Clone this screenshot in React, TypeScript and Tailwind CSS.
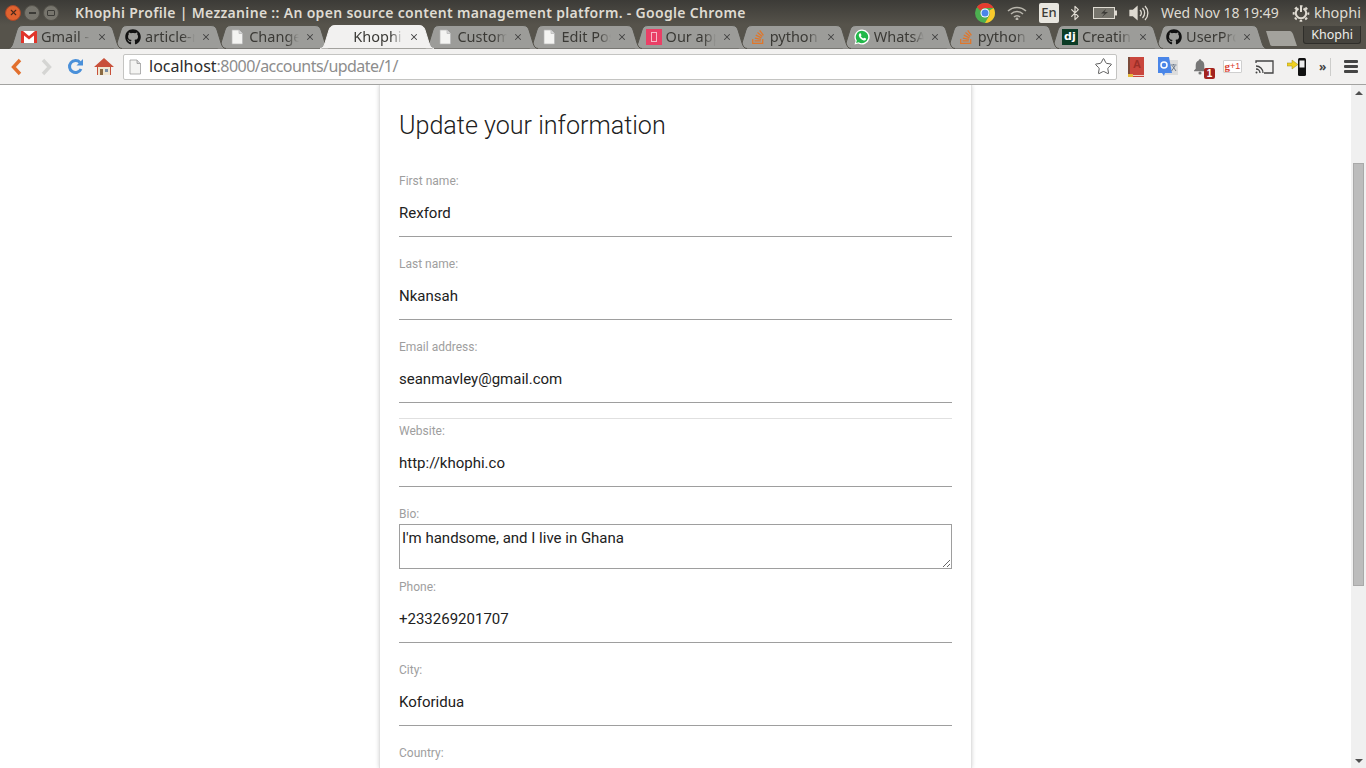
import React from 'react';
import { X, Star, Bluetooth } from 'lucide-react';
import { FaGithub, FaStackOverflow } from 'react-icons/fa';

function PageIcon({ color = '#f4f4f2', line = '#b5b5b5' }: { color?: string; line?: string }) {
  return (
    <svg width="16" height="16" viewBox="0 0 16 16">
      <path d="M3 1h7l3.500 3.500V15H3z" fill={color} stroke={line} strokeWidth="0.7" />
      <path d="M10 1v3.500h3.500" fill="#d8d8d8" stroke={line} strokeWidth="0.7" />
    </svg>
  );
}

function GmailIcon() {
  return (
    <svg width="16" height="16" viewBox="0 0 16 16">
      <rect x="0" y="2" width="16" height="12" fill="#fff" />
      <path d="M0 14V2h2l6 5 6-5h2v12h-3V6.500L8 10.500 3 6.500V14z" fill="#e0352b" />
    </svg>
  );
}

function CliffIcon() {
  return (
    <div className="w-4 h-4 bg-[#ea3f66] flex items-center justify-center">
      <div className="w-[6px] h-[10px] border border-[#f7b9c8]" />
    </div>
  );
}

function DjangoIcon() {
  return (
    <div className="w-4 h-4 bg-[#0c3c26] flex items-center justify-center text-white text-[11px] font-bold leading-none font-['DejaVu_Sans',sans-serif]">
      dj
    </div>
  );
}

function WhatsappIcon() {
  return (
    <svg width="16" height="16" viewBox="0 0 16 16">
      <path d="M8 .500a7.500 7.500 0 0 0-6.400 11.400L.500 15.500l3.700-1.100A7.500 7.500 0 1 0 8 .500z" fill="#fff" />
      <path d="M8 1.800a6.200 6.200 0 0 0-5.200 9.600l-.7 2.500 2.500-.7A6.200 6.200 0 1 0 8 1.800z" fill="#22b84a" />
      <path d="M5.500 4.500l1.200-.2.800 2-.7.900c.5 1 1.300 1.800 2.400 2.300l.9-.8 2 .9-.2 1.200c-.5.6-1.300.9-2.100.7-2.600-.6-4.500-2.600-5-4.900-.1-.8.100-1.500.7-2.100z" fill="#fff" />
    </svg>
  );
}

const tabs = [
  { title: 'Gmail -', icon: <GmailIcon /> },
  { title: 'article-m', icon: <FaGithub size={16} color="#111" /> },
  { title: 'Change', icon: <PageIcon /> },
  { title: 'Khophi', icon: null, active: true },
  { title: 'Custom', icon: <PageIcon /> },
  { title: 'Edit Pos', icon: <PageIcon /> },
  { title: 'Our app', icon: <CliffIcon /> },
  { title: 'python', icon: <FaStackOverflow size={16} color="#e0762a" /> },
  { title: 'WhatsA', icon: <WhatsappIcon /> },
  { title: 'python', icon: <FaStackOverflow size={16} color="#e0762a" /> },
  { title: 'Creatin', icon: <DjangoIcon /> },
  { title: 'UserPro', icon: <FaGithub size={16} color="#111" /> },
];

function Tab({ title, icon, active, index }: { title: string; icon: React.ReactNode; active?: boolean; index: number }) {
  return (
    <div className="relative w-[104.100px] h-[24px] shrink-0" style={{ zIndex: active ? 30 : 20 - index }}>
      <svg className="absolute left-0 top-0" width="114" height="24" viewBox="0 0 114 24">
        <path
          d="M0 23.500C3 23.500 4 21 5 18L9 5C10 2 11.500 0.500 15 0.500H99C102.500 0.500 104 2 105 5L109 18C110 21 111 23.500 114 23.500"
          fill={active ? '#f2f1f0' : '#9c9c99'}
          stroke={active ? '#f2f1f0' : '#55534c'}
          strokeWidth="1"
        />
      </svg>
      <div className="relative flex items-center h-full pl-[13px] pb-[1px]">
        <div className="w-4 h-4 shrink-0 flex items-center justify-center">{icon}</div>
        <div className="ml-1 w-[50px] pb-[2px] overflow-hidden whitespace-nowrap text-[14.500px] leading-[18px] text-[#3b3a36] [mask-image:linear-gradient(to_right,black_75%,transparent)]">
          {title}
        </div>
        <X size={10} strokeWidth={2.5} color="#444" className="ml-[6px] shrink-0" />
      </div>
    </div>
  );
}

function ChromeLogo() {
  return (
    <svg width="20" height="20" viewBox="0 0 20 20">
      <circle cx="10" cy="10" r="10" fill="#4caf50" />
      <path d="M10 0a10 10 0 0 1 8.660 5H10a5 5 0 0 0-4.500 2.800L1.900 4.100A10 10 0 0 1 10 0z" fill="#e53b30" />
      <path d="M18.660 5A10 10 0 0 1 10 20l4.300-7.500A5 5 0 0 0 14.300 7.500z" fill="#f9c82b" />
      <circle cx="10" cy="10" r="4.500" fill="#fff" />
      <circle cx="10" cy="10" r="3.500" fill="#4a86e8" />
    </svg>
  );
}

function SessionGear() {
  return (
    <svg className="ml-[13px]" width="18" height="18" viewBox="0 0 18 18" fill="none" stroke="#dfdbd2">
      <path d="M6.500 4.500a5.200 5.200 0 1 0 5 0" strokeWidth="2" />
      <path d="M9 2v6" strokeWidth="2" />
      <circle cx="9" cy="9.500" r="7.300" strokeWidth="2" strokeDasharray="2.600 3.130" strokeDashoffset="1.300" />
    </svg>
  );
}

function TitleBar() {
  return (
    <div className="h-[25px] shrink-0 flex items-center bg-gradient-to-b from-[#3c3b37] to-[#56534b] font-['Noto_Sans',sans-serif]">
      <div className="flex items-center pl-[5px] gap-[3px]">
        <div className="w-4 h-4 rounded-full bg-[#e0622f] border border-[#a8482a] flex items-center justify-center">
          <X size={9} strokeWidth={3} color="#4a2a1c" />
        </div>
        <div className="w-4 h-4 rounded-full bg-[#77756d] border border-[#55534c] flex items-center justify-center">
          <div className="w-[7px] h-[2px] bg-[#3c3b37]" />
        </div>
        <div className="w-4 h-4 rounded-full bg-[#77756d] border border-[#55534c] flex items-center justify-center">
          <div className="w-[8px] h-[6px] rounded-[1px] border border-[#3c3b37]" />
        </div>
      </div>
      <div className="ml-[16px] text-[14px] font-semibold text-[#dfdbd2] whitespace-nowrap tracking-[0.32px]">
        Khophi Profile | Mezzanine :: An open source content management platform. - Google Chrome
      </div>
      <div className="ml-auto flex items-center h-full text-[#dfdbd2]">
        <ChromeLogo />
        <svg className="ml-[12px]" width="20" height="14" viewBox="0 0 20 14" fill="none" stroke="#b9b6ad" strokeWidth="1.500">
          <path d="M1 5a13 13 0 0 1 18 0" />
          <path d="M4 8a8.500 8.500 0 0 1 12 0" />
          <path d="M7 11a4 4 0 0 1 6 0" />
          <circle cx="10" cy="13" r="0.700" fill="#b9b6ad" />
        </svg>
        <div className="ml-[12px] w-[20px] h-[20px] bg-[#e8e6df] rounded-[2px] flex items-center justify-center text-[#3c3b37] text-[13px] font-medium">En</div>
        <Bluetooth className="ml-[8px]" size={16} strokeWidth={1.800} color="#dfdbd2" />
        <svg className="ml-[10px]" width="24" height="12" viewBox="0 0 24 12">
          <rect x="0.500" y="0.500" width="21" height="11" fill="#77756d" stroke="#dfdbd2" />
          <rect x="22" y="3.500" width="2" height="5" fill="#dfdbd2" />
          <path d="M13 2L8 6.500h3.500L9 10l6-5h-3.500z" fill="#3c3b37" />
        </svg>
        <svg className="ml-[12px]" width="20" height="16" viewBox="0 0 20 16" fill="none" stroke="#dfdbd2" strokeWidth="1.300">
          <path d="M1 5.500h3l4-3.500v12l-4-3.500H1z" fill="#dfdbd2" />
          <path d="M11 5a4 4 0 0 1 0 6" />
          <path d="M13.500 3a7 7 0 0 1 0 10" />
          <path d="M16 1a10 10 0 0 1 0 14" />
        </svg>
        <div className="ml-[12px] text-[14px] text-[#dfdbd2] whitespace-nowrap">Wed Nov 18 19:49</div>
        <SessionGear />
        <div className="ml-[4px] mr-[5px] text-[14.500px] text-[#dfdbd2]">khophi</div>
      </div>
    </div>
  );
}

function TabStrip() {
  return (
    <div className="relative h-[24px] shrink-0 flex pl-[8px] bg-[#56534b] border-b border-[#55534c] font-['Noto_Sans',sans-serif]">
      {tabs.map((t, i) => (
        <Tab key={i} index={i} title={t.title} icon={t.icon} active={t.active} />
      ))}
      <svg className="ml-[9px] mt-[5px]" width="32" height="17" viewBox="0 0 32 17">
        <path d="M0 1h24c1 0 2 1 3 3l4 12H6C5 16 4 15 4 14z" fill="#a3a29c" />
      </svg>
      <div className="ml-[5px] mt-[1px] w-[58px] h-[18px] rounded-b-[3px] border border-t-0 border-[#2f2e2a] bg-[#45433d] text-[#eeeeea] text-[12.500px] leading-[17px] text-center">
        Khophi
      </div>
    </div>
  );
}

function ToolbarIcons() {
  return (
    <div className="flex items-center h-full">
      <div className="relative ml-[11px] w-[16px] h-[20px] bg-[#c9463d] border-l-2 border-[#7b4a3a] flex justify-center text-[11px] font-bold leading-[14px] text-[#9c2f28] font-['Liberation_Sans',sans-serif]">
        A
        <div className="absolute left-[-2px] bottom-0 w-[5px] h-[3px] bg-[#e6b93a]" />
        <div className="absolute right-0 bottom-[1px] w-[11px] h-px bg-[#f0d0c8]" />
      </div>
      <svg className="ml-[14px]" width="20" height="20" viewBox="0 0 20 20">
        <rect x="7" y="3" width="13" height="15" fill="#dcdcdc" />
        <path d="M0 0h11l3 16H7l-1 3-2-3H0z" fill="#4a86e8" />
        <circle cx="6" cy="8" r="3" fill="none" stroke="#fff" strokeWidth="1.500" />
        <path d="M12.500 8h6M15.500 7v1M13.500 14l3.500-5M14.500 9l3.500 5" stroke="#6d7a8c" strokeWidth="1" fill="none" />
      </svg>
      <div className="relative ml-[16px] w-[22px] h-[24px]">
        <svg className="absolute left-[0px] top-[4px]" width="12" height="16" viewBox="0 0 14 18">
          <path d="M7 0c1 0 1.500.7 1.500 1.500C11 2.300 12 4.500 12 7v4l2 2v1H0v-1l2-2V7c0-2.500 1-4.700 3.500-5.500C5.500.7 6 0 7 0z" fill="#777" />
          <circle cx="7" cy="16" r="1.800" fill="#777" />
        </svg>
        <div className="absolute left-[10px] top-[13px] w-[11px] h-[11px] rounded-[2px] bg-[#a3231f] text-white text-[10px] font-bold leading-[11px] text-center font-['Liberation_Sans',sans-serif]">1</div>
      </div>
      <div className="ml-[7px] w-[19px] h-[13px] bg-white border border-[#cfcfcf] rounded-[1px] flex items-center justify-center text-[#d9402e] text-[9px] leading-none font-['Liberation_Sans',sans-serif]">
        <span className="font-bold text-[11px] font-['Liberation_Serif',serif]">g</span>+1
      </div>
      <svg className="ml-[13px]" width="19" height="14" viewBox="0 0 19 14" fill="none" stroke="#444" strokeWidth="1.300">
        <path d="M1 3V1h17v12H9" />
        <path d="M1 6a7 7 0 0 1 7 7M1 9a4 4 0 0 1 4 4" />
        <circle cx="1.500" cy="12.500" r="1" fill="#444" stroke="none" />
      </svg>
      <svg className="ml-[13px]" width="20" height="20" viewBox="0 0 20 20">
        <rect x="11" y="1" width="8" height="18" rx="1.500" fill="#111" />
        <rect x="12.500" y="3.500" width="5" height="7" fill="#eee" />
        <path d="M0 6h5V3l6 4.500-6 4.500V9H0z" fill="#f0d020" stroke="#9a8a20" strokeWidth="0.500" />
      </svg>
      <div className="ml-[12px] w-[9px] text-[12px] font-bold leading-none text-[#444]">»</div>
      <div className="ml-[2px] w-px h-[18px] bg-[#cdcdcb]" />
      <div className="ml-[13px] flex flex-col gap-[2px]">
        <div className="w-[14px] h-[3px] rounded-[1px] bg-[#444]" />
        <div className="w-[14px] h-[3px] rounded-[1px] bg-[#444]" />
        <div className="w-[14px] h-[3px] rounded-[1px] bg-[#444]" />
      </div>
    </div>
  );
}

function Toolbar() {
  return (
    <div className="h-[36px] shrink-0 flex items-center bg-[#f2f1f0] border-b border-[#a3a3a1] font-['Noto_Sans',sans-serif]">
      <svg className="ml-[10px]" width="13" height="18" viewBox="0 0 13 18" fill="none">
        <path d="M10 2L3.500 9l6.500 7" stroke="#e2702e" strokeWidth="3.400" />
      </svg>
      <svg className="ml-[17px]" width="13" height="18" viewBox="0 0 13 18" fill="none">
        <path d="M3 2l6.500 7L3 16" stroke="#d5d5d3" strokeWidth="3.400" />
      </svg>
      <svg className="ml-[14px]" width="17" height="17" viewBox="0 0 17 17" fill="none">
        <path d="M14 11a6 6 0 1 1-1-6.500" stroke="#4a90d9" strokeWidth="3" />
        <path d="M16 1v6.500H9.500z" fill="#4a90d9" />
      </svg>
      <svg className="ml-[10px]" width="20" height="19" viewBox="0 0 20 19">
        <path d="M10 1L0 10h3v8h14v-8h3z" fill="#c8503a" />
        <rect x="4" y="10" width="12" height="8" fill="#efe6d2" />
        <rect x="6" y="12" width="3" height="6" fill="#8a6a42" />
        <rect x="11" y="12" width="3" height="3" fill="#7a8fa8" />
      </svg>
      <div className="ml-[9px] w-[994px] h-[26px] shrink-0 flex items-center bg-white border border-[#c4c4c2] rounded-[2px]">
        <div className="ml-[3px] w-4 h-4 shrink-0">
          <PageIcon line="#8f8f8f" />
        </div>
        <div className="ml-[6px] pb-[2px] text-[16px] leading-none whitespace-nowrap text-[#2c2c2c]">
          localhost<span className="text-[#8d8d8d] tracking-[-0.55px]">:8000/accounts/update/1/</span>
        </div>
        <Star className="ml-auto mr-[3px]" size={19} strokeWidth={1.200} color="#555" />
      </div>
      <ToolbarIcons />
    </div>
  );
}

function Field({ label, value }: { label: string; value: string }) {
  return (
    <div className="mb-[18px]">
      <label className="block h-[18px] text-[12px] leading-[18px] text-[#9e9e9e]">{label}</label>
      <input
        readOnly
        defaultValue={value}
        className="block w-full h-[47px] border-b border-[#9e9e9e] text-[15px] text-[#212121] outline-none bg-transparent"
      />
    </div>
  );
}

function Scrollbar() {
  return (
    <div className="w-[15px] shrink-0 flex flex-col items-center bg-[#f0f0f0]">
      <div className="mt-[6px] w-0 h-0 border-x-[4px] border-x-transparent border-b-[4px] border-b-[#505050]" />
      <div className="mt-[68px] w-[11px] h-[423px] bg-[#bcbcbc] border border-[#a9a9a9]" />
      <div className="mt-auto mb-[5px] w-0 h-0 border-x-[4px] border-x-transparent border-t-[4px] border-t-[#505050]" />
    </div>
  );
}

export default function App() {
  return (
    <div className="h-screen flex flex-col overflow-hidden bg-white">
      <TitleBar />
      <TabStrip />
      <Toolbar />
      <div className="flex-1 min-h-0 flex">
        <div className="flex-1 flex justify-center overflow-hidden">
          <div className="w-[593px] shrink-0 px-[19px] pt-5 border-x border-[#e2e2e2] shadow-[0_0_4px_rgba(0,0,0,0.18)] font-['Roboto',sans-serif]">
            <h1 className="h-[40px] mb-[27px] text-[25.100px] leading-[42px] font-light text-[#212121]">Update your information</h1>
            <Field label="First name:" value="Rexford" />
            <Field label="Last name:" value="Nkansah" />
            <div className="mb-[15px]">
              <label className="block h-[18px] text-[12px] leading-[18px] text-[#9e9e9e]">Email address:</label>
              <input readOnly defaultValue="seanmavley@gmail.com" className="block w-full h-[47px] border-b border-[#9e9e9e] text-[15px] text-[#212121] outline-none bg-transparent" />
            </div>
            <div className="h-px mb-[3px] bg-[#e0e0e0]" />
            <Field label="Website:" value="http://khophi.co" />
            <label className="block h-[18px] text-[12px] leading-[18px] text-[#9e9e9e]">Bio:</label>
            <textarea
              readOnly
              defaultValue="I'm handsome, and I live in Ghana"
              className="block w-full h-[45px] mt-px mb-[9px] px-[2px] pt-[3px] border border-[#9e9e9e] text-[15px] leading-[20px] text-[#212121] outline-none"
            />
            <Field label="Phone:" value="+233269201707" />
            <Field label="City:" value="Koforidua" />
            <Field label="Country:" value="" />
          </div>
        </div>
        <Scrollbar />
      </div>
    </div>
  );
}
